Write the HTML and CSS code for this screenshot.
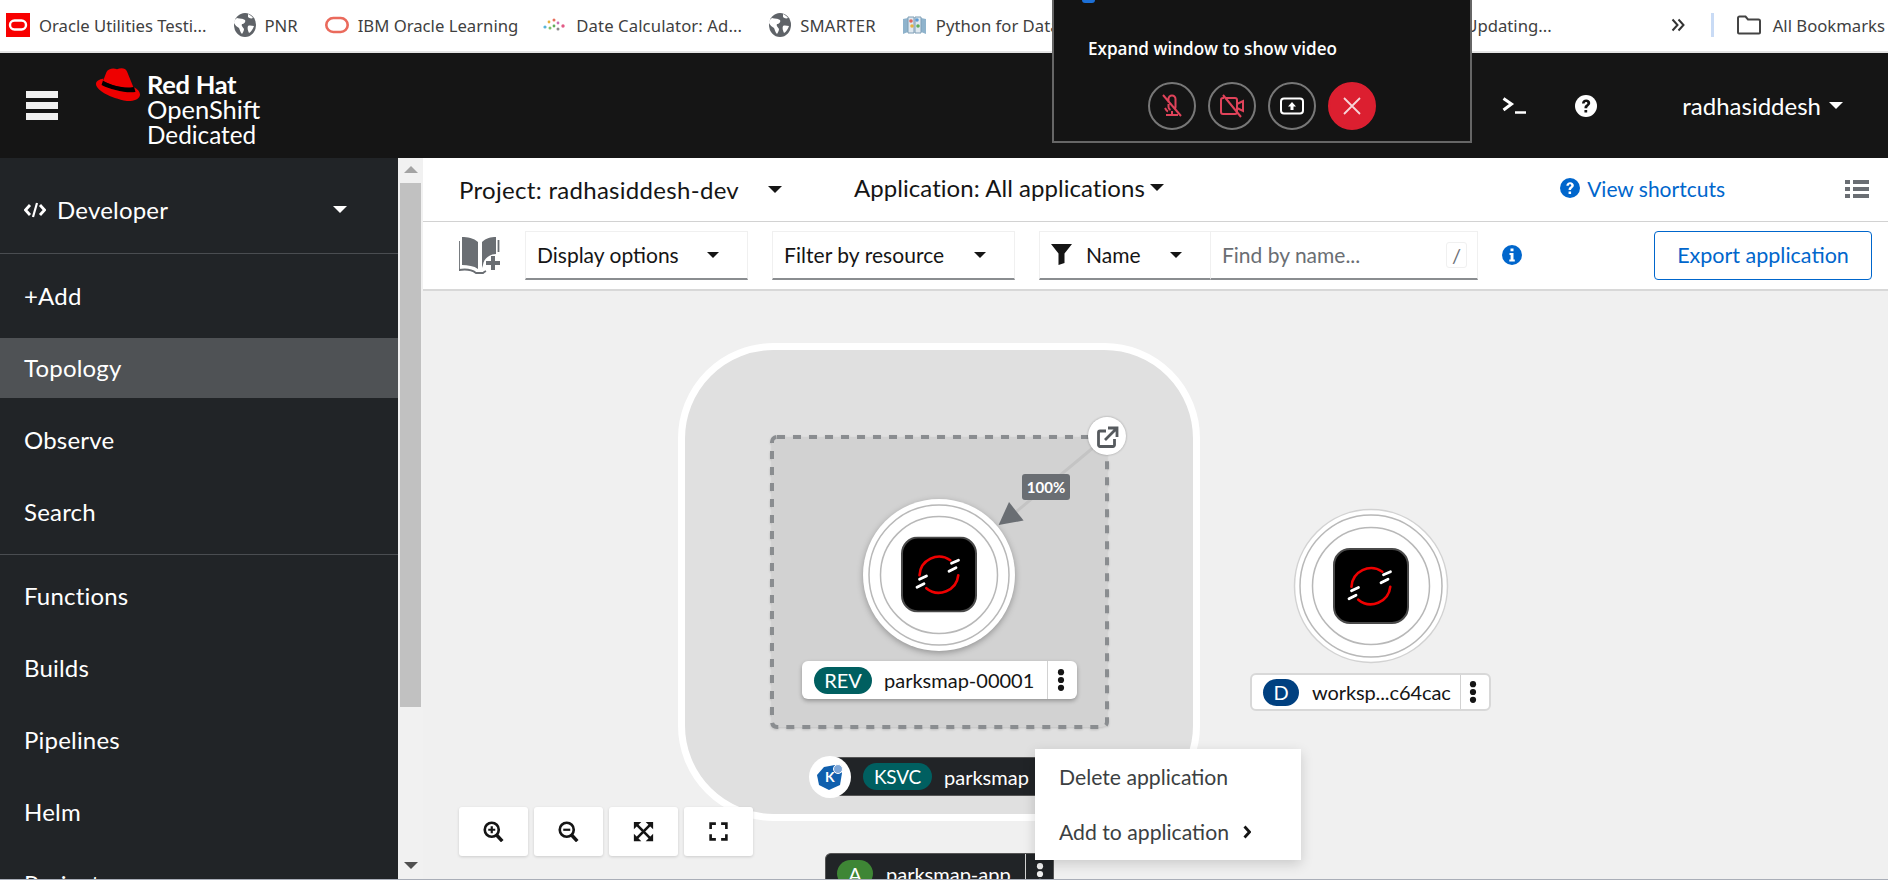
FILE: index.html
```html
<!DOCTYPE html>
<html lang="en">
<head>
<meta charset="utf-8">
<title>Topology · Red Hat OpenShift Dedicated</title>
<link rel="stylesheet" href="styles.css">
</head>
<body>
<svg class="defs" width="0" height="0" aria-hidden="true">
  <defs>
    <symbol id="globe" viewBox="0 0 22 24">
      <ellipse cx="11" cy="12" rx="11" ry="12" fill="#5f6368"/>
      <path d="M3 5c3 1 5 0 8 2 1 2-1 4-3 4-1 2 1 3 2 5 0 2-1 3-2 5-2-2-2-4-3-6-2-1-4-3-5-5 0-2 1-4 3-5zM14 1c2 1 4 2 5 4-2 1-4 0-5-1zM14 13c2-1 4 0 6 0-1 3-3 6-5 7-1-2-2-5-1-7z" fill="#fff"/>
    </symbol>
    <symbol id="osicon" viewBox="0 0 76 76">
      <rect x="1" y="1" width="74" height="74" rx="16" fill="#000" stroke="#4a4a4a" stroke-width="2"/>
      <path d="M18.5 38.7A19.6 19.6 0 0 1 49.3 23.7" fill="none" stroke="#e00" stroke-width="2.6" stroke-linecap="round"/>
      <path d="M57.3 38.7A19.6 19.6 0 0 1 25.3 51.7" fill="none" stroke="#e00" stroke-width="2.6" stroke-linecap="round"/>
      <path d="M50.5 26.7L57.5 23.7M48 34.7L55 31.2M18.5 42.7L25.5 39.5M16 50.7L23 47.2" stroke="#fff" stroke-width="2.8" stroke-linecap="round"/>
    </symbol>
    <symbol id="kebab" viewBox="0 0 8 22">
      <circle cx="4" cy="3.2" r="3.1"/><circle cx="4" cy="11" r="3.1"/><circle cx="4" cy="18.8" r="3.1"/>
    </symbol>
    <symbol id="helpc" viewBox="0 0 24 24">
      <circle cx="12" cy="12" r="12"/>
      <path d="M7.6 9.2C7.8 6.6 9.6 5 12.2 5c2.6 0 4.4 1.6 4.4 3.8 0 1.7-1 2.6-2.1 3.4-1 .7-1.2 1.1-1.2 2.3h-3c0-2 .5-2.9 1.7-3.8.9-.7 1.5-1.1 1.5-1.8 0-.8-.6-1.3-1.4-1.3-.9 0-1.5.6-1.6 1.6zM10.3 16.3h3v2.9h-3z" fill="var(--q)"/>
    </symbol>
  </defs>
</svg>

<div class="app">
  <header class="bookmarks">
    <a class="bm bm-oracle">
      <svg class="fav-oracle" viewBox="0 0 24 24"><rect width="24" height="24" fill="#f80000"/><rect x="4" y="7.5" width="16" height="9" rx="4.5" fill="none" stroke="#fff" stroke-width="2.4"/></svg>
      <span>Oracle Utilities Testi...</span>
    </a>
    <a class="bm bm-pnr"><svg class="fav-globe"><use href="#globe"/></svg><span>PNR</span></a>
    <a class="bm bm-ibm">
      <svg class="fav-ring" viewBox="0 0 24 18"><rect x="1.3" y="2" width="21.4" height="14" rx="7" fill="none" stroke="#ea6a5c" stroke-width="2.6"/></svg>
      <span>IBM Oracle Learning</span>
    </a>
    <a class="bm bm-date">
      <svg class="fav-date" viewBox="0 0 22 14">
        <circle cx="2" cy="9" r="1.6" fill="#58b5d9"/><circle cx="6" cy="4" r="1.4" fill="#e6b13f"/><circle cx="7" cy="10" r="1.5" fill="#7cc36a"/><circle cx="11" cy="2" r="1.5" fill="#e76f5e"/><circle cx="11" cy="8" r="1.4" fill="#5fae5c"/><circle cx="15" cy="5" r="1.4" fill="#c86fb2"/><circle cx="15" cy="11" r="1.5" fill="#888"/><circle cx="20" cy="8" r="1.7" fill="#e25a86"/>
      </svg>
      <span>Date Calculator: Ad...</span>
    </a>
    <a class="bm bm-smarter"><svg class="fav-globe"><use href="#globe"/></svg><span>SMARTER</span></a>
    <a class="bm bm-python">
      <svg class="fav-book" viewBox="0 0 25 22">
        <path d="M1 5l5-1v14l-5 2zM24 5l-5-1v14l5 2z" fill="#8fb3cc"/><path d="M6 3h6v16H6zM13 3h6v16h-6z" fill="#dfe8ef" stroke="#7d9db5"/>
        <circle cx="9" cy="7" r="1.8" fill="#e0655c"/><circle cx="15" cy="6" r="1.8" fill="#5a9bd4"/><circle cx="10" cy="12" r="1.8" fill="#e7b23f"/><circle cx="16" cy="12" r="1.8" fill="#5fae5c"/>
      </svg>
      <span>Python for Data Analysis</span>
    </a>
    <span class="bm-fill"></span>
    <a class="bm bm-upd"><span>Updating...</span></a>
    <svg class="bm-more" viewBox="0 0 14 14"><path d="M1.500 1.500L6.500 7l-5 5.500M7.500 1.500l5 5.500-5 5.500" fill="none" stroke="#333" stroke-width="2"/></svg>
    <span class="bm-sep"></span>
    <a class="bm bm-all">
      <svg class="fav-folder" viewBox="0 0 24 20"><path d="M1 3a1.500 1.500 0 0 1 1.500-1.500h6l2.500 3h10.500A1.500 1.500 0 0 1 23 6v11.500a1 1 0 0 1-1 1H2a1 1 0 0 1-1-1z" fill="none" stroke="#444" stroke-width="2"/></svg>
      <span>All Bookmarks</span>
    </a>
  </header>

  <div class="masthead">
    <div class="burger"><i></i><i></i><i></i></div>
    <div class="brand">
      <svg class="hat" viewBox="0 0 44 33">
        <path d="M10.500 4C12 .8 17 -.5 21 1.200 25 -.3 29.500 -.3 31 3.500L37.500 19.500C30 21 16 18 7 13Z" fill="#e00"/>
        <path d="M7 12.800C16 18 30 21 37.600 19L39.500 24C30 25.500 14 21.500 5.500 17Z" fill="#000"/>
        <path d="M7.500 10.500C3 11.500 0 13 0 16 0 22 14 30 31 33 38 33.500 44 31 44 26.500 44 24 42 21.500 38.300 19.200L39.500 24C30 25.500 14 21.500 5.500 17Z" fill="#e00"/>
      </svg>
      <div class="brand-text">
        <b>Red Hat</b>
        <span>OpenShift</span>
        <span class="ded">Dedicated</span>
      </div>
    </div>
    <div class="mast-right">
      <svg class="term" viewBox="0 0 24 18"><path d="M1.500 1.500L9.500 7l-8 6" fill="none" stroke="#fff" stroke-width="3"/><path d="M13 15.500h11" stroke="#fff" stroke-width="2.500"/></svg>
      <svg class="mast-help"><use href="#helpc"/></svg>
      <div class="user">radhasiddesh<i class="caret caret-w"></i></div>
    </div>
  </div>

  <div class="body">
    <nav class="sidebar">
      <div class="perspective">
        <svg class="code" viewBox="0 0 22 16"><path d="M6 3L1.500 8 6 13M16 3l4.500 5L16 13" fill="none" stroke="#fff" stroke-width="2.800"/><path d="M13 1L9 15" stroke="#fff" stroke-width="2.200"/></svg>
        <span>Developer</span>
        <i class="caret caret-w persp-caret"></i>
      </div>
      <div class="navgroup">
        <a class="navitem">+Add</a>
        <a class="navitem active">Topology</a>
        <a class="navitem">Observe</a>
        <a class="navitem">Search</a>
      </div>
      <div class="navgroup">
        <a class="navitem">Functions</a>
        <a class="navitem">Builds</a>
        <a class="navitem">Pipelines</a>
        <a class="navitem">Helm</a>
        <a class="navitem">Project</a>
      </div>
    </nav>
    <div class="scrollbar">
      <i class="arr-up"></i>
      <div class="thumb"></div>
      <i class="arr-down"></i>
    </div>

    <main class="main">
      <div class="context">
        <div class="project">Project: radhasiddesh-dev<i class="caret caret-k"></i></div>
        <div class="application">Application: All applications<i class="caret caret-k"></i></div>
        <a class="shortcuts"><svg class="sc-help"><use href="#helpc"/></svg>View shortcuts</a>
        <svg class="listicon" viewBox="0 0 24 18"><path d="M0 0h5v4H0zM8 0h16v4H8zM0 7h5v4H0zM8 7h16v4H8zM0 14h5v4H0zM8 14h16v4H8z" fill="#6a6e73"/></svg>
      </div>

      <div class="toolbar">
        <svg class="bookicon" viewBox="0 0 42 38">
          <path d="M19 6C15 2 8 1 3 1v28c6 0 12 1 16 4zM23 6c4-4 9-5 14-5v17c-6 0-12 4-13 11l-1 3z" fill="#6a6e73"/>
          <path d="M0 5v29c6-1 12-1 17 3h7c1-1 2-1.500 3-2" fill="none" stroke="#6a6e73" stroke-width="1.800"/>
          <path d="M39.500 4v12" stroke="#6a6e73" stroke-width="1.800"/>
          <path d="M32 20h4v5h5v4h-5v5h-4v-5h-5v-4h5z" fill="#6a6e73"/>
        </svg>
        <div class="select sel-display">Display options<i class="caret caret-k"></i></div>
        <div class="select sel-filter">Filter by resource<i class="caret caret-k"></i></div>
        <div class="search">
          <div class="select sel-name">
            <svg class="funnel" viewBox="0 0 21 21"><path d="M0 0h21L13.500 9.500V19l-6 2V9.500z" fill="#151515"/></svg>
            Name<i class="caret caret-k"></i>
          </div>
          <div class="find"><span>Find by name...</span><kbd>/</kbd></div>
        </div>
        <svg class="infoicon" viewBox="0 0 20 20"><circle cx="10" cy="10" r="10" fill="#06c"/><path d="M8.500 3.500h3v2.800h-3zM7.500 8h4v6.500h1.300V16.500H7.300v-2h1.300V10H7.500z" fill="#fff"/></svg>
        <a class="export">Export application</a>
      </div>

      <div class="canvas">
        <svg class="diagram" width="1465" height="589" viewBox="423 291 1465 589">
          <rect class="group" x="681.500" y="346.500" width="515" height="471" rx="92"/>
          <rect class="revgroup" x="772" y="437" width="335" height="290" rx="5"/>
          <line class="edge" x1="1100" y1="442" x2="1005" y2="521"/>
          <path class="arrow" d="M998.600 525L1009 502L1023.600 520.600Z"/>
          <g class="node node-shadow">
            <circle cx="939" cy="575" r="76"/>
          </g>
          <circle class="ring" cx="939" cy="575" r="70"/>
          <circle class="ring" cx="939" cy="575" r="58.500"/>
          <use href="#osicon" x="901" y="536.500" width="76" height="76"/>
          <circle class="linkdot" cx="1107" cy="436" r="19"/>
          <path class="linkicon" d="M1106 431h-6a1.500 1.500 0 0 0-1.500 1.500v12.500a1.500 1.500 0 0 0 1.500 1.500h13a1.500 1.500 0 0 0 1.500-1.500v-6M1105 440l11-11M1108 428h9v9"/>

          <circle class="node-plain" cx="1371" cy="586" r="76.500"/>
          <circle class="ring" cx="1371" cy="586" r="71"/>
          <circle class="ring" cx="1371" cy="586" r="58.500"/>
          <use href="#osicon" x="1333" y="548" width="76" height="76"/>
        </svg>

        <div class="pct">100%</div>

        <div class="label label-rev">
          <span class="badge badge-teal">REV</span>
          <span class="lname">parksmap-00001</span>
          <span class="lkebab"><svg class="kb"><use href="#kebab"/></svg></span>
        </div>
        <div class="label label-dep">
          <span class="badge badge-blue">D</span>
          <span class="lname">worksp...c64cac</span>
          <span class="lkebab"><svg class="kb"><use href="#kebab"/></svg></span>
        </div>
        <div class="label label-ksvc">
          <span class="badge badge-teal badge-k">KSVC</span>
          <span class="lname">parksmap</span>
        </div>
        <div class="kdot">
          <svg viewBox="0 0 30 30"><path d="M9 5L20 3 27 11 25 23 14 28 4 23 2 13Z" fill="#0f5fad"/><circle cx="23" cy="7" r="4.500" fill="#7ea7d8" stroke="#fff"/></svg>
          <span>K</span>
        </div>
        <div class="label label-app">
          <span class="badge badge-green">A</span>
          <span class="lname">parksmap-app</span>
          <span class="lkebab"><svg class="kb kb-w"><use href="#kebab"/></svg></span>
        </div>

        <div class="menu">
          <div class="menuitem">Delete application</div>
          <div class="menuitem">Add to application<svg class="chev" viewBox="0 0 8 14"><path d="M1.500 1.500L6.500 7l-5 5.500" fill="none" stroke="#151515" stroke-width="2.800"/></svg></div>
        </div>

        <div class="zoomctl">
          <button class="zbtn"><svg viewBox="0 0 24 24"><circle cx="10" cy="10" r="8" class="zs"/><path d="M15.500 16L22 23" class="zs zt"/><path d="M6 10h8M10 6v8" class="zs zp"/></svg></button>
          <button class="zbtn"><svg viewBox="0 0 24 24"><circle cx="10" cy="10" r="8" class="zs"/><path d="M15.500 16L22 23" class="zs zt"/><path d="M6 10h8" class="zs zp"/></svg></button>
          <button class="zbtn"><svg viewBox="0 0 24 24"><path d="M4.500 4.500L19.500 19.500M19.500 4.500L4.500 19.500" class="zs"/><path d="M1 1h8.500L1 9.500zM23 1h-8.500L23 9.500zM1 23h8.500L1 14.500zM23 23h-8.500L23 14.500z" fill="#151515"/></svg></button>
          <button class="zbtn"><svg viewBox="0 0 24 24"><path d="M3 9V3h6M15 3h6v6M21 15v6h-6M9 21H3v-6" class="zs zf"/></svg></button>
        </div>
      </div>
    </main>
  </div>

  <aside class="popup">
    <i class="popup-logo"></i>
    <p class="popup-text">Expand window to show video</p>
    <div class="popup-btns">
      <span class="cbtn"><svg viewBox="0 0 24 24" class="cico"><path d="M8.500 8.500V5a3.500 3.500 0 0 1 7 0v8a3.500 3.500 0 0 1-1 2.500M8.500 10v3c0 1.500 1 2.500 2 3M12 17v4M6 21h12M5 14c1 2 2 3 3 3.500M3 1l18 21"/></svg></span>
      <span class="cbtn"><svg viewBox="0 0 24 24" class="cico"><path d="M6 4h9a2 2 0 0 1 2 2v12a2 2 0 0 1-2 2H3a2 2 0 0 1-2-2V6a2 2 0 0 1 2-2h1M17 10l6-3v10l-6-3M3 1l18 22"/></svg></span>
      <span class="cbtn"><svg viewBox="0 0 24 24" class="cico cico-w"><rect x="1" y="4.500" width="22" height="15" rx="3"/><path class="fillw" d="M12 8l4 4.500h-2.500V16h-3v-3.500H8z"/></svg></span>
      <span class="cbtn cbtn-end"><svg viewBox="0 0 24 24" class="cico cico-x"><path d="M4 4l16 16M20 4L4 20"/></svg></span>
    </div>
  </aside>
</div>
</body>
</html>
```
FILE: styles.css
```css
* { box-sizing: border-box; }
html, body { margin: 0; padding: 0; height: 100%; overflow: hidden; background: #fff; }
body { font-family: "Lato", "Liberation Sans", sans-serif; color: #151515; }
.defs { position: absolute; }
.app { position: relative; width: 1888px; height: 880px; display: flex; flex-direction: column; overflow: hidden; border-bottom: 1px solid #a9aeb8; }
a { color: inherit; text-decoration: none; }

/* bookmarks */
.bookmarks { flex: none; height: 53px; display: flex; align-items: center; padding: 0 3px 1px 6px; background: #fff; border-bottom: 2px solid #e4e4e4; font-family: "Noto Sans", sans-serif; font-size: 16.700px; color: #3f3f3f; white-space: nowrap; }
.bm { display: flex; align-items: center; flex: none; }
.bm-oracle { gap: 9px; }
.bm-pnr { margin-left: 27px; gap: 9px; }
.bm-ibm { margin-left: 27px; gap: 9px; }
.bm-date { margin-left: 25px; gap: 11px; letter-spacing: .1px; }
.bm-smarter { margin-left: 27px; gap: 9px; letter-spacing: .2px; }
.bm-python { margin-left: 26px; gap: 9px; }
.bm-fill { flex: 1; }
.bm-more { width: 14px; height: 14px; margin-left: 119px; flex: none; }
.bm-sep { width: 3px; height: 24px; background: #c9dbf5; margin-left: 26px; flex: none; }
.bm-all { margin-left: 23px; gap: 12px; }
.fav-oracle { width: 24px; height: 24px; }
.fav-globe { width: 22px; height: 24px; }
.fav-ring { width: 24px; height: 18px; }
.fav-date { width: 22px; height: 14px; }
.fav-book { width: 25px; height: 22px; }
.fav-folder { width: 24px; height: 20px; }

/* masthead */
.masthead { flex: none; height: 105px; background: #151515; display: flex; align-items: center; color: #fff; }
.burger { margin-left: 26px; width: 32px; display: flex; flex-direction: column; gap: 4px; }
.burger i { display: block; height: 7px; background: #f0f0f0; }
.brand { margin-left: 38px; display: flex; align-items: flex-start; gap: 7px; align-self: flex-start; padding-top: 15px; }
.hat { width: 44px; height: 33px; flex: none; }
.brand-text { display: flex; flex-direction: column; line-height: 25px; font-size: 25.500px; padding-top: 4px; }
.brand-text b { font-weight: 700; letter-spacing: -0.3px; }
.brand-text .ded { font-size: 24.300px; }
.mast-right { margin-left: auto; display: flex; align-items: center; padding-right: 45px; }
.term { width: 24px; height: 18px; }
.mast-help { width: 22px; height: 24px; margin-left: 49px; fill: #fff; --q: #151515; }
.user { margin-left: 85px; font-size: 24px; display: flex; align-items: center; }
.caret { display: inline-block; width: 0; height: 0; border-style: solid; border-width: 7px 7px 0; border-color: transparent; }
.caret-w { border-top-color: #fff; }
.caret-k { border-top-color: #151515; }
.user .caret { margin-left: 8px; }

/* layout */
.body { flex: 1; min-height: 0; display: flex; }
.sidebar { width: 398px; flex: none; background: #212427; color: #fff; overflow: hidden; font-size: 24px; letter-spacing: .2px; }
.perspective { height: 96px; border-bottom: 1px solid #4a4d51; display: flex; align-items: center; padding: 8px 0 0 24px; }
.code { width: 22px; height: 16px; margin-right: 11px; }
.persp-caret { margin-left: auto; margin-right: 51px; }
.navgroup { padding: 12px 0 12px; display: flex; flex-direction: column; gap: 12px; border-bottom: 1px solid #4a4d51; }
.navgroup:last-child { border-bottom: 0; padding-top: 11px; }
.navitem { display: flex; align-items: center; height: 60px; padding: 0 0 2px 24px; flex: none; }
.navitem.active { background: #4f5255; }

.scrollbar { width: 25px; flex: none; background: #f1f1f1; display: flex; flex-direction: column; align-items: center; position: relative; }
.arr-up { width: 0; height: 0; border: 7px solid transparent; border-top: 0; border-bottom: 7px solid #a3a3a3; margin-top: 8px; }
.thumb { width: 21px; height: 524px; background: #c1c1c1; margin-top: 10px; }
.arr-down { width: 0; height: 0; border: 7px solid transparent; border-bottom: 0; border-top: 7px solid #505050; margin-top: 155px; }

.main { flex: 1; min-width: 0; display: flex; flex-direction: column; }
.context { flex: none; height: 64px; display: flex; align-items: center; border-bottom: 1px solid #d2d2d2; padding: 0 19px 1px 36px; font-size: 24px; }
.project { display: flex; align-items: center; letter-spacing: .3px; }
.project .caret { margin-left: 29px; }
.application { display: flex; align-items: center; margin-left: 72px; margin-top: -4px; letter-spacing: .05px; }
.application .caret { margin-left: 5px; }
.shortcuts { margin-left: auto; margin-top: -2px; color: #06c; font-size: 21px; display: flex; align-items: center; gap: 7px; }
.sc-help { width: 20px; height: 22px; fill: #06c; --q: #fff; }
.listicon { width: 24px; height: 18px; margin-left: 120px; }

.toolbar { flex: none; height: 69px; border-bottom: 2px solid #d8d8d8; display: flex; align-items: center; padding: 0 16px 1px 36px; font-size: 21px; }
.bookicon { width: 42px; height: 38px; flex: none; }
.select { display: flex; align-items: center; height: 49px; border: 1px solid #f0f0f0; border-bottom: 2px solid #8a8d90; padding: 0 11px; flex: none; }
.select .caret { margin-left: auto; border-width: 6.500px 6.500px 0; }
.sel-display { width: 223px; margin-left: 24px; }
.sel-display .caret { margin-right: 17px; }
.sel-filter { width: 243px; margin-left: 24px; letter-spacing: .05px; }
.sel-filter .caret { margin-right: 17px; }
.search { display: flex; margin-left: 24px; flex: none; }
.sel-name { width: 172px; }
.sel-name .caret { margin-right: 17px; }
.funnel { width: 21px; height: 21px; margin-right: 14px; }
.find { width: 267px; height: 49px; border: 1px solid #f0f0f0; border-left: 0; border-bottom: 2px solid #8a8d90; display: flex; align-items: center; justify-content: space-between; padding: 0 10px 0 11px; color: #6a6e73; }
.find kbd { width: 21px; height: 26px; border: 1px solid #f0f0f0; border-radius: 3px; display: flex; align-items: center; justify-content: center; font: inherit; font-size: 20px; }
.infoicon { width: 20px; height: 20px; margin-left: 24px; flex: none; }
.export { margin-left: auto; width: 218px; height: 49px; border: 1px solid #06c; border-radius: 4px; color: #06c; display: flex; align-items: center; justify-content: center; font-size: 21.500px; }

/* canvas */
.canvas { flex: 1; min-height: 0; position: relative; background: #f0f0f0; overflow: hidden; }
.diagram { position: absolute; left: 0; top: 0; }
.group { fill: #e0e0e0; stroke: #fff; stroke-width: 7; }
.revgroup { fill: #d2d2d2; stroke: #8a8d90; stroke-width: 4; stroke-dasharray: 8 8; filter: drop-shadow(0 1px 1px rgba(0,0,0,.15)); }
.edge { stroke: #c4c4c4; stroke-width: 3; }
.arrow { fill: #6a6e73; }
.node-shadow { fill: #fff; filter: drop-shadow(0 2px 3px rgba(0,0,0,.3)); }
.node-plain { fill: #fff; stroke: #d2d2d2; stroke-width: 1.500; }
.ring { fill: #fff; stroke: #b8b8b8; stroke-width: 1.500; }
.linkdot { fill: #fff; filter: drop-shadow(0 0 1px rgba(0,0,0,.3)); }
.linkicon { fill: none; stroke: #565a5e; stroke-width: 2.800; }

.pct { position: absolute; left: 599px; top: 183px; width: 48px; height: 26px; border-radius: 3px; background: #6a6e73; color: #fff; font-size: 15px; font-weight: 700; display: flex; align-items: center; justify-content: center; }

.label { position: absolute; display: flex; align-items: center; height: 38px; border-radius: 6px; background: #fff; font-size: 20px; white-space: nowrap; }
.badge { display: flex; align-items: center; justify-content: center; height: 27px; border-radius: 14px; color: #fff; flex: none; }
.badge-teal { background: #005f60; }
.badge-blue { background: #004080; }
.badge-green { background: #3e8635; }
.badge-k { font-size: 19px; letter-spacing: -.2px; }
.lkebab { display: flex; align-items: center; justify-content: center; height: 100%; border-left: 1px solid #d2d2d2; flex: none; }
.kb { width: 8px; height: 22px; fill: #151515; }
.kb-w { fill: #f0f0f0; }

.label-rev { left: 379px; top: 370px; width: 275px; padding-left: 12px; box-shadow: 0 2px 4px rgba(0,0,0,.3); }
.label-rev .badge { width: 58px; }
.label-rev .lname { margin-left: 12px; width: 163px; }
.label-rev .lkebab { width: 26px; }
.label-dep { left: 827px; top: 382px; width: 241px; padding-left: 12px; border: 2px solid #d8d8d8; }
.label-dep .badge { width: 36px; margin-left: -1px; }
.label-dep .lname { margin-left: 13px; width: 148px; letter-spacing: -.1px; }
.label-dep .lkebab { width: 25px; }
.label-ksvc { left: 405px; top: 466px; width: 300px; height: 39px; padding-left: 34px; background: #212427; color: #fff; border: 1px solid #555; }
.label-ksvc .badge { width: 69px; }
.label-ksvc .lname { margin-left: 12px; }
.kdot { position: absolute; left: 386px; top: 465px; width: 42px; height: 42px; border-radius: 50%; background: #fff; display: flex; align-items: center; justify-content: center; }
.kdot svg { width: 30px; height: 30px; }
.kdot span { position: absolute; left: 16px; top: 11px; font-size: 14px; font-weight: 700; color: #fff; line-height: 20px; }
.label-app { left: 402px; top: 562px; width: 229px; height: 40px; padding-left: 11px; background: #212427; color: #fff; border: 1px solid #555; border-bottom: 0; border-radius: 6px 6px 0 0; }
.label-app .badge { width: 36px; margin-top: 0; }
.label-app .lname { margin-left: 13px; width: 139px; }
.label-app .lkebab { width: 28px; }

.menu { position: absolute; left: 612px; top: 458px; width: 266px; height: 111px; background: #fff; box-shadow: 0 4px 12px rgba(0,0,0,.16); padding: 0 24px; font-size: 21.200px; color: #3c3f42; }
.menuitem { height: 55px; display: flex; align-items: center; white-space: nowrap; }
.chev { width: 8px; height: 14px; margin-left: 14px; }

.zoomctl { position: absolute; left: 36px; top: 516px; display: flex; gap: 6px; }
.zbtn { width: 69px; height: 49px; padding: 0; border: 0; background: #fff; border-radius: 3px; box-shadow: 0 1px 3px rgba(0,0,0,.15); display: flex; align-items: center; justify-content: center; }
.zbtn svg { width: 21px; height: 21px; }
.zs { fill: none; stroke: #151515; stroke-width: 3; }
.zt { stroke-width: 4; }
.zp { stroke-width: 2.500; }
.zf { stroke-width: 3; }

/* floating call window */
.popup { position: absolute; left: 1052px; top: -2px; width: 420px; height: 145px; background: #141414; border: 2px solid #666; color: #fff; }
.popup-logo { position: absolute; left: 28px; top: 0; width: 13px; height: 3px; border-radius: 0 0 4px 4px; background: #1c6fd6; }
.popup-text { position: absolute; left: 34px; top: 38px; margin: 0; font-family: "Open Sans", sans-serif; font-size: 17.100px; font-weight: 600; line-height: 22px; white-space: nowrap; }
.popup-btns { position: absolute; left: 94px; top: 82px; display: flex; gap: 12px; }
.cbtn { width: 48px; height: 48px; border: 2px solid #777; border-radius: 50%; display: flex; align-items: center; justify-content: center; }
.cbtn-end { background: #dc1f30; border-color: #dc1f30; }
.cico { width: 24px; height: 24px; fill: none; stroke: #e0435a; stroke-width: 2; }
.cico-w { stroke: #fff; }
.cico-w .fillw { fill: #fff; stroke: none; }
.cico-x { stroke: #f6d5d8; stroke-width: 1.800; }
```
